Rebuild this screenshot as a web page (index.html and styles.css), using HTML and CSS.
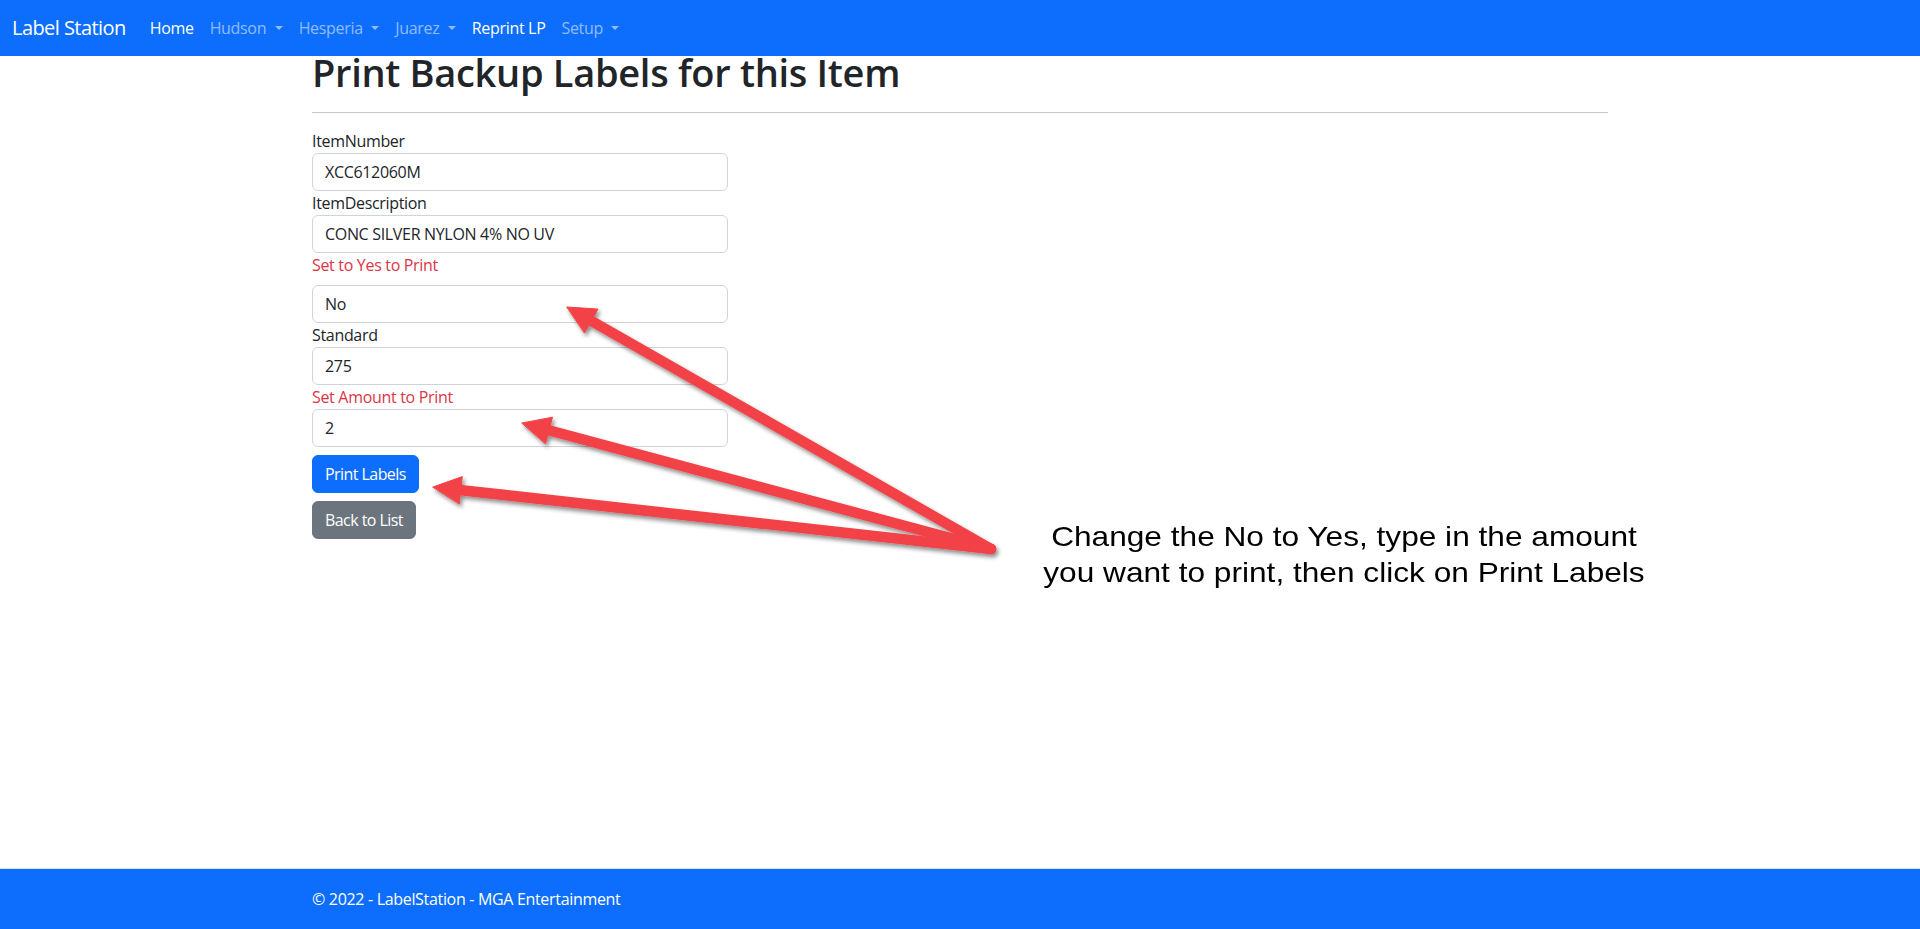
FILE: index.html
```html
<!DOCTYPE html>
<html lang="en">
<head>
<meta charset="utf-8">
<title>Print Backup Labels - LabelStation</title>
<link rel="stylesheet" href="styles.css">
</head>
<body>
<nav class="navbar">
  <div class="nav-inner">
    <a class="brand" href="#">Label Station</a>
    <ul class="nav-list">
      <li><a class="nav-link active" href="#">Home</a></li>
      <li><a class="nav-link dropdown" href="#">Hudson</a></li>
      <li><a class="nav-link dropdown" href="#">Hesperia</a></li>
      <li><a class="nav-link dropdown" href="#">Juarez</a></li>
      <li><a class="nav-link active" href="#">Reprint LP</a></li>
      <li><a class="nav-link dropdown" href="#">Setup</a></li>
    </ul>
  </div>
</nav>

<main class="main">
  <div class="container">
    <h1 class="title">Print Backup Labels for this Item</h1>
    <hr class="rule">
    <div class="form-col">
      <label class="field-label">ItemNumber</label>
      <input class="form-control" type="text" value="XCC612060M">
      <label class="field-label">ItemDescription</label>
      <input class="form-control" type="text" value="CONC SILVER NYLON 4% NO UV">
      <label class="field-label warn gap">Set to Yes to Print</label>
      <input class="form-control" type="text" value="No">
      <label class="field-label">Standard</label>
      <input class="form-control" type="text" value="275">
      <label class="field-label warn">Set Amount to Print</label>
      <input class="form-control" type="text" value="2">
      <div class="actions">
        <button class="btn btn-primary" type="button">Print Labels</button>
        <button class="btn btn-secondary" type="button">Back to List</button>
      </div>
    </div>
  </div>
</main>

<footer class="footer">
  <div class="container">&copy; 2022 - LabelStation - MGA Entertainment</div>
</footer>

<svg class="arrows" width="1920" height="929" viewBox="0 0 1920 929" xmlns="http://www.w3.org/2000/svg" aria-hidden="true">
  <defs>
    <filter id="shadow" x="-10%" y="-10%" width="120%" height="130%">
      <feDropShadow dx="2" dy="3" stdDeviation="2" flood-color="#000" flood-opacity="0.45"/>
    </filter>
  </defs>
  <g filter="url(#shadow)" fill="#f34246" stroke="#f34246" stroke-linecap="round" stroke-linejoin="round">
    <line x1="588" y1="319" x2="991" y2="549" stroke-width="10.5"/>
    <polygon points="567,307 598,309.1 584.6,332.7" stroke-width="1"/>
    <line x1="546" y1="429.5" x2="991" y2="549" stroke-width="10.5"/>
    <polygon points="522,423 552.5,417.2 545.5,443.4" stroke-width="1"/>
    <line x1="457" y1="489.7" x2="991" y2="549" stroke-width="10.5"/>
    <polygon points="433,487 462.3,476.6 459.3,503.6" stroke-width="1"/>
  </g>
</svg>

<div class="note">Change the No to Yes, type in the amount<br>you want to print, then click on Print Labels</div>
</body>
</html>
```

FILE: styles.css
```css
* {
  box-sizing: border-box;
}

html, body {
  margin: 0;
  padding: 0;
}

body {
  position: relative;
  min-height: 929px;
  display: flex;
  flex-direction: column;
  font-family: "Open Sans", "Noto Sans", sans-serif;
  font-size: 16px;
  line-height: 24px;
  letter-spacing: -0.02em;
  color: #212529;
  background: #fff;
}

/* Navbar */
.navbar {
  background: #0d6efd;
  padding: 8px 0;
}

.nav-inner {
  display: flex;
  align-items: center;
  padding: 0 12px;
}

.brand {
  font-size: 20px;
  line-height: 30px;
  padding: 5px 0;
  margin-right: 16px;
  letter-spacing: -0.028em;
  color: #fff;
  text-decoration: none;
  white-space: nowrap;
}

.nav-list {
  display: flex;
  list-style: none;
  margin: 0;
  padding: 0;
}

.nav-link {
  display: block;
  padding: 8px;
  color: rgba(255, 255, 255, 0.55);
  text-decoration: none;
}

.nav-link.active {
  color: #fff;
}

.nav-link.dropdown::after {
  content: "";
  display: inline-block;
  margin-left: 0.53em;
  vertical-align: 0.255em;
  border-top: 0.3em solid;
  border-right: 0.3em solid transparent;
  border-left: 0.3em solid transparent;
  border-bottom: 0;
}

/* Main */
.main {
  flex: 1;
}

.container {
  width: 1320px;
  margin: 0 auto;
  padding: 0 12px;
}

.title {
  margin: 0;
  font-size: 38px;
  line-height: 32px;
  font-weight: 600;
  letter-spacing: -0.008em;
  color: #212529;
}

.rule {
  margin: 24px 0 16px;
  border: 0;
  border-top: 1px solid #c8c9ca;
  height: 0;
}

.form-col {
  width: 416px;
}

.field-label {
  display: block;
  line-height: 24px;
}

.field-label.warn {
  color: #dc3545;
}

.field-label.gap {
  margin-bottom: 8px;
}

.form-control {
  display: block;
  width: 100%;
  height: 38px;
  padding: 6px 12px;
  font: inherit;
  letter-spacing: inherit;
  line-height: 24px;
  color: #212529;
  background: #fff;
  border: 1px solid #ced4da;
  border-radius: 6px;
  outline: none;
}

.actions {
  display: flex;
  flex-direction: column;
  align-items: flex-start;
  gap: 8px;
  margin-top: 8px;
}

.btn {
  font: inherit;
  letter-spacing: -0.035em;
  line-height: 24px;
  padding: 6px 12px;
  border: 1px solid transparent;
  border-radius: 6px;
  color: #fff;
  cursor: pointer;
}

.btn-primary {
  background: #0d6efd;
  border-color: #0d6efd;
}

.btn-secondary {
  background: #6c757d;
  border-color: #6c757d;
}

/* Footer */
.footer {
  border-top: 1px solid #dee2e6;
  background: #0d6efd;
  color: #fff;
  line-height: 60px;
  white-space: nowrap;
}

/* Annotation overlay */
.arrows {
  position: absolute;
  top: 0;
  left: 0;
  pointer-events: none;
}

.note {
  position: absolute;
  left: 1044px;
  top: 518px;
  width: 600px;
  text-align: center;
  font-family: "Liberation Sans", Arial, sans-serif;
  font-size: 28.5px;
  line-height: 36px;
  letter-spacing: 0;
  color: #000;
  transform: scaleX(1.11);
  transform-origin: center top;
  white-space: nowrap;
}
```
